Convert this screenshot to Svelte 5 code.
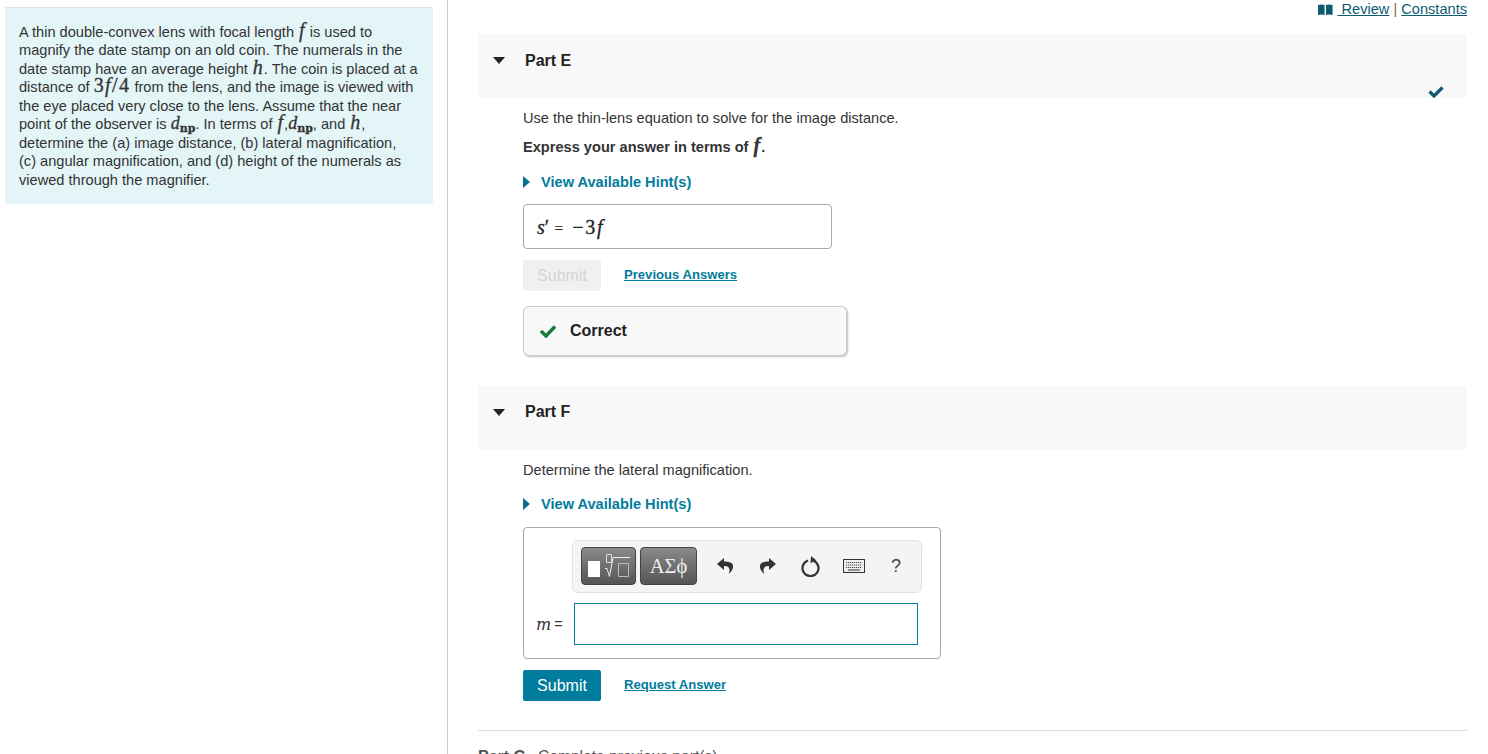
<script lang="ts">
  let answer = $state("");
</script>

<div class="page">
  <aside class="left">
    <div class="intro">
      A thin double-convex lens with focal length <i class="math big">f</i> is used to<br />
      magnify the date stamp on an old coin. The numerals in the<br />
      date stamp have an average height <i class="math big">h</i>. The coin is placed at a<br />
      distance of <span class="math big wide">3<i>f</i>/4</span> from the lens, and the image is viewed with<br />
      the eye placed very close to the lens. Assume that the near<br />
      point of the observer is <span class="math dnp"><i>d</i><sub>np</sub></span>. In terms of <i class="math big">f</i>,<span class="math dnp"><i>d</i><sub>np</sub></span>, and <i class="math big">h</i>,<br />
      determine the (a) image distance, (b) lateral magnification,<br />
      (c) angular magnification, and (d) height of the numerals as<br />
      viewed through the magnifier.
    </div>
  </aside>

  <main class="right">
    <div class="toplinks">
      <svg class="book" width="15" height="11" viewBox="0 0 15 11"><path d="M0 1c2-.8 4.500-.8 6.600 0v10C4.500 10.200 2 10.200 0 11zM8 1c2-.8 4.500-.8 6.600 0v10c-2-.8-4.500-.8-6.600 0z" fill="#0d5c73" /></svg>
      <a href="#r">&nbsp;Review</a> <span class="sep">|</span> <a href="#c">Constants</a>
    </div>

    <section class="part">
      <header class="parthead">
        <span class="caret"></span>
        <h2 class="lower">Part E</h2>
        <svg class="donecheck" width="16" height="13" viewBox="0 0 16 13"><path d="M1.500 6.500 6 11 14.500 2.500" fill="none" stroke="#0d5c73" stroke-width="3.200" /></svg>
      </header>
      <div class="body">
        <p class="q first">Use the thin-lens equation to solve for the image distance.</p>
        <p class="q bold">Express your answer in terms of <i class="math big">f</i>.</p>
        <div class="hint"><span class="tri"></span>View Available Hint(s)</div>
        <div class="answerbox">
          <span class="math ans"><i>s</i>′<span class="eq">=</span><span class="val">−3<i>f</i></span></span>
        </div>
        <div class="actions">
          <button class="submit off">Submit</button>
          <a class="blink" href="#p">Previous Answers</a>
        </div>
        <div class="correct">
          <svg width="18" height="14" viewBox="0 0 18 14"><path d="M2 7l5 5 9-9.500" fill="none" stroke="#167c3c" stroke-width="3.400" /></svg>
          <b>Correct</b>
        </div>
      </div>
    </section>

    <section class="part second">
      <header class="parthead">
        <span class="caret"></span>
        <h2>Part F</h2>
      </header>
      <div class="body">
        <p class="q first">Determine the lateral magnification.</p>
        <div class="hint h2"><span class="tri"></span>View Available Hint(s)</div>
        <div class="editor">
          <div class="toolbar">
            <div class="tbtn tmpl">
              <span class="solid"></span>
              <svg width="28" height="28" viewBox="0 0 28 28"><g fill="none" stroke-width="1"><path d="M4.500 2.500h5v8h-5z" stroke="#ddd" /><path d="M3 16.500h2l2.500 8 3.500-19h17" stroke="#eee" /><path d="M16.500 11.500h10v13h-10z" stroke="#bbb" /></g></svg>
            </div>
            <div class="tbtn greek">ΑΣϕ</div>
            <svg class="ic undo" width="16" height="16" viewBox="0 0 16 16"><path d="M7 0 0 6l7 6V8c3-.3 5 .8 5.500 3.500.2 1.500-.3 3-1 4.500 3-2 5-5 4.500-8.500C15.500 4.500 12 3.500 7 3.500z" fill="#333" /></svg>
            <svg class="ic redo" width="16" height="16" viewBox="0 0 16 16"><path d="M9 0l7 6-7 6V8c-3-.3-5 .8-5.500 3.500-.2 1.500.3 3 1 4.500-3-2-5-5-4.500-8.500C.5 4.500 4 3.500 9 3.500z" fill="#333" /></svg>
            <svg class="ic reset" width="19" height="21" viewBox="0 0 19 21"><path d="M12 4.500a8 8 0 1 1-5 0" fill="none" stroke="#333" stroke-width="2.200" /><path d="M10 0l5.500 4.500-6 2.500z" fill="#333" /></svg>
            <svg class="ic keys" width="22" height="14" viewBox="0 0 22 14"><rect x=".5" y=".5" width="21" height="13" fill="#eee" stroke="#333" /><path d="M3 3.500h16M3 6h16M3 8.500h16" stroke="#444" stroke-dasharray="1.200 .8" /><path d="M5 11h12" stroke="#333" /></svg>
            <span class="help">?</span>
          </div>
          <div class="inputrow">
            <span class="mlabel"><i>m</i><span>=</span></span>
            <input class="mathinput" bind:value={answer} />
          </div>
        </div>
        <div class="actions a2">
          <button class="submit">Submit</button>
          <a class="blink" href="#a">Request Answer</a>
        </div>
      </div>
    </section>

    <div class="partg"><b>Part G</b><span>Complete previous part(s)</span></div>
  </main>
</div>

<style>
  :global(body) {
    margin: 0;
    background: #fff;
    color: #333;
    font-family: "Liberation Sans", Arial, sans-serif;
    font-size: 14.6px;
  }

  .page {
    display: flex;
    height: 754px;
    overflow: hidden;
  }

  .left {
    flex: none;
    box-sizing: border-box;
    border-right: 1px solid #c8ccd4;
    padding: 7px 14px 0 5px;
    width: 448px;
  }

  .intro {
    height: 197px;
    box-sizing: border-box;
    border-top: 1px solid #dde5e8;
    background: #e4f5f7;
    padding: 14.600px 0 0 14px;
    font-size: 14.600px;
    line-height: 18.500px;
    white-space: nowrap;
  }

  .math {
    font-family: "Liberation Serif", "DejaVu Serif", serif;
    -webkit-text-stroke: 0.3px currentColor;
  }
  .big {
    font-size: 20px;
    line-height: 1px;
    padding: 0 1px;
  }
  .wide {
    letter-spacing: 1.400px;
    padding: 0;
  }
  .dnp {
    font-size: 18px;
    line-height: 1px;
  }
  .dnp sub {
    font-size: 11px;
    line-height: 1px;
    vertical-align: -3px;
    font-family: "DejaVu Serif", serif;
    font-weight: 700;
  }

  .right {
    flex: 1;
    min-width: 0;
    padding: 0 21px 0 30px;
  }

  .toplinks {
    height: 34px;
    box-sizing: border-box;
    padding-top: 1px;
    text-align: right;
    line-height: 17px;
    color: #0d5c73;
  }
  .toplinks a {
    color: #0d5c73;
  }
  .sep {
    color: #8a6a3a;
  }
  .book {
    vertical-align: -1px;
  }

  .part.second {
    margin-top: 30px;
  }

  .parthead {
    position: relative;
    display: flex;
    height: 63px;
    background: #f8f8f8;
    padding: 17px 0 0 47px;
    box-sizing: border-box;
  }
  .parthead h2 {
    margin: 0;
    font-size: 16px;
    line-height: 18px;
    font-weight: 700;
    color: #222;
  }
  .parthead h2.lower {
    padding-top: 1px;
  }
  .caret {
    position: absolute;
    left: 15px;
    top: 23px;
    border-left: 6.500px solid transparent;
    border-right: 6.500px solid transparent;
    border-top: 7px solid #222;
  }
  .donecheck {
    position: absolute;
    right: 23px;
    bottom: -1px;
  }

  .body {
    padding-left: 45px;
  }

  .q {
    margin: 0;
    line-height: 18px;
  }
  .q.first {
    padding-top: 12px;
  }
  .q.bold {
    margin-top: 11px;
    font-weight: 700;
  }

  .hint {
    display: flex;
    align-items: center;
    margin-top: 17px;
    height: 18px;
    font-weight: 700;
    color: #007c9c;
  }
  .hint.h2 {
    margin-top: 16px;
  }
  .tri {
    width: 0;
    border-top: 6px solid transparent;
    border-bottom: 6px solid transparent;
    border-left: 7px solid #0b6e8a;
    margin-right: 11px;
  }

  .answerbox {
    width: 309px;
    height: 45px;
    box-sizing: border-box;
    margin-top: 13px;
    border: 1px solid #aaa;
    border-radius: 4px;
    padding: 11px 0 0 13px;
  }
  .ans {
    font-size: 20px;
    color: #222;
    white-space: nowrap;
  }
  .eq {
    font-size: 16px;
    margin: 0 9px 0 5px;
    -webkit-text-stroke: 0;
  }
  .val {
    letter-spacing: 1.800px;
  }

  .actions {
    display: flex;
    align-items: center;
    gap: 23px;
    margin-top: 11px;
  }
  .actions .blink {
    margin-top: -3px;
  }

  .submit {
    width: 78px;
    height: 31px;
    border: none;
    border-radius: 2px;
    background: #007c9c;
    color: #fff;
    font-family: inherit;
    font-size: 16px;
    padding: 0;
  }
  .submit.off {
    background: #f0f0f0;
    color: #d4d4d4;
  }

  .blink {
    color: #007c9c;
    font-size: 13.100px;
    font-weight: 700;
  }

  .correct {
    display: flex;
    align-items: center;
    gap: 13px;
    width: 324px;
    height: 50px;
    box-sizing: border-box;
    margin-top: 15px;
    padding-left: 15px;
    background: #f8f8f8;
    border: 1px solid #ccc;
    border-radius: 6px;
    box-shadow: 1px 1px 2px rgba(0, 0, 0, 0.25);
    font-size: 16px;
    color: #222;
  }

  .editor {
    width: 418px;
    height: 132px;
    box-sizing: border-box;
    margin-top: 14px;
    border: 1px solid #aaa;
    border-radius: 4px;
    padding: 12px 18px 0 48px;
  }

  .toolbar {
    display: flex;
    align-items: center;
    height: 53px;
    box-sizing: border-box;
    padding: 0 0 1px 8px;
    background: #f4f4f4;
    border: 1px solid #e2e2e2;
    border-radius: 6px;
  }
  .tbtn {
    display: flex;
    align-items: center;
    justify-content: center;
    height: 38px;
    box-sizing: border-box;
    border: 1px solid #444;
    border-radius: 4px;
    background: linear-gradient(#8a8a8a, #555);
    color: #eee;
  }
  .tmpl {
    width: 55px;
    gap: 2px;
    padding-left: 1px;
  }
  .solid {
    width: 12px;
    height: 16px;
    background: #fff;
    margin-top: 6px;
  }
  .greek {
    width: 57px;
    margin-left: 4px;
    font-family: "Liberation Serif", serif;
    font-size: 20.500px;
  }
  .ic {
    flex: none;
  }
  .undo {
    margin-left: 20px;
  }
  .redo {
    margin-left: 27px;
  }
  .reset {
    margin-left: 25px;
  }
  .keys {
    margin-left: 23px;
  }
  .help {
    margin-left: 26px;
    font-size: 18px;
    color: #444;
  }

  .inputrow {
    display: flex;
    align-items: center;
    margin-top: 10px;
    margin-left: -36px;
  }
  .mlabel {
    display: flex;
    align-items: center;
    gap: 3px;
    width: 38px;
    font-family: "DejaVu Serif", serif;
    font-size: 16px;
    color: #333;
  }
  .mlabel span {
    font-family: "Liberation Sans", sans-serif;
    font-size: 14px;
  }
  .mathinput {
    width: 344px;
    height: 42px;
    box-sizing: border-box;
    border: 1px solid #007c9c;
    outline: none;
    padding: 0;
  }

  .partg {
    margin-top: 29px;
    padding-top: 17px;
    border-top: 1px solid #ddd;
    font-size: 16px;
    line-height: 18px;
    color: #555;
  }
  .partg span {
    margin-left: 12px;
    font-size: 15.600px;
  }
</style>
